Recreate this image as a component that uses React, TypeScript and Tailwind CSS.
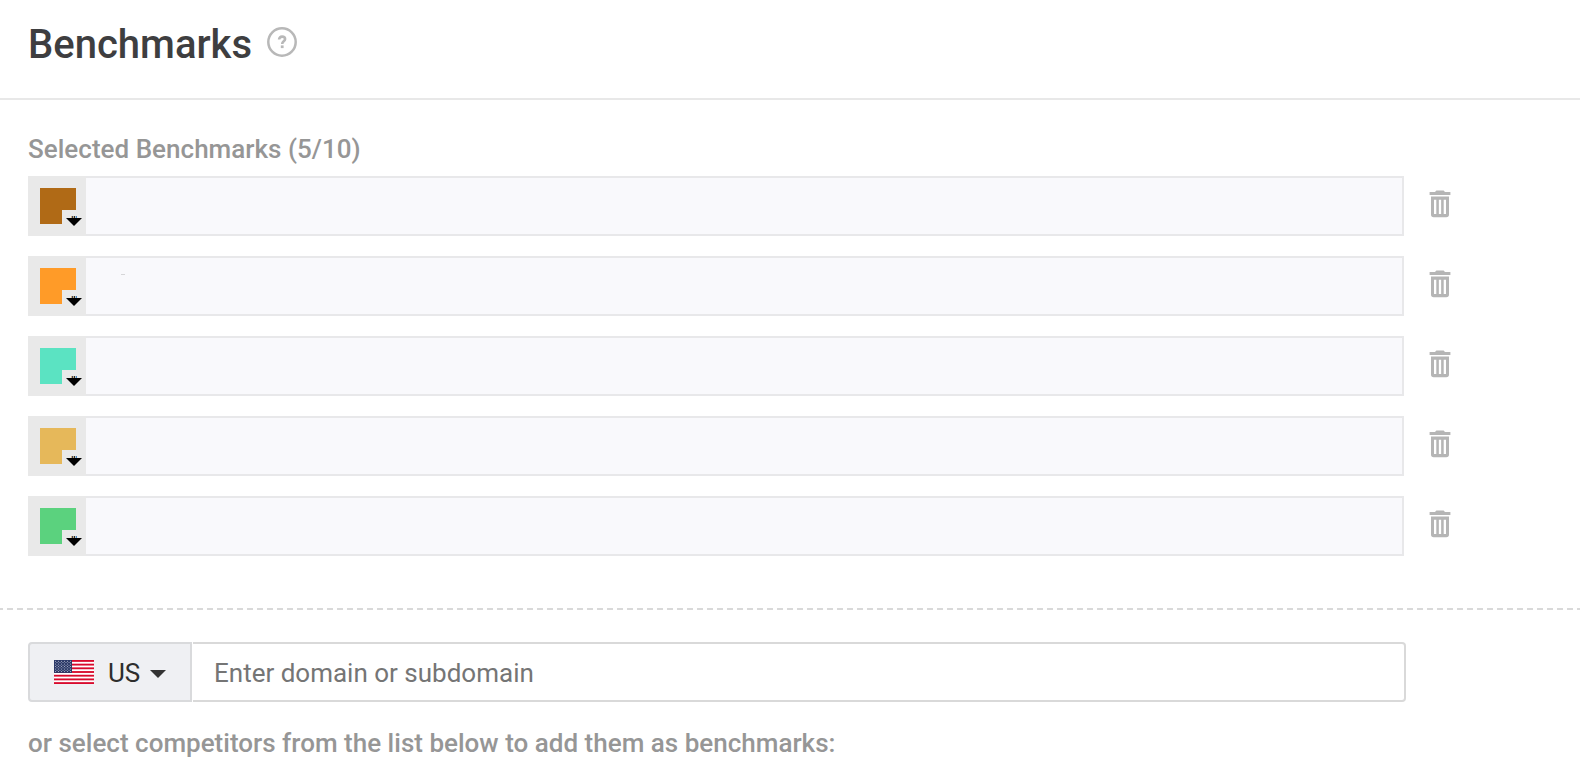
const benchmarks = [
  { id: 1, color: "#b06a16" },
  { id: 2, color: "#ff9b28" },
  { id: 3, color: "#5be3c2" },
  { id: 4, color: "#e6b85a" },
  { id: 5, color: "#5bd27e" },
];

const stripes = [0, 1, 2, 3, 4, 5, 6];
const starRows = [0, 1, 2, 3, 4, 5, 6, 7, 8];

function HelpIcon() {
  return (
    <svg width="30" height="30" viewBox="0 0 30 30" fill="none">
      <circle cx="15" cy="15" r="13.7" stroke="#b8b8b8" strokeWidth="2.5" />
      <path
        d="M12.1 12.6C12.1 10.6 13.3 9.6 15.1 9.6c1.8 0 3 1 3 2.5 0 2.2-2.9 2.3-2.9 4.8"
        stroke="#b8b8b8"
        strokeWidth="2.6"
      />
      <path d="M13.8 18.4h2.8v2.7h-2.8z" fill="#b8b8b8" />
    </svg>
  );
}

function TrashIcon() {
  return (
    <svg width="22" height="28" viewBox="0 0 22 28" fill="#b5b5b5">
      <path d="M6 2 7.4.6h7.2L16 2h5.4v3H.6V2z" />
      <path
        fillRule="evenodd"
        d="M2 6.6h18v18a2.7 2.7 0 0 1-2.7 2.7H4.7A2.7 2.7 0 0 1 2 24.6zM5 9.8v14.2h2.3V9.8zM9.85 9.8v14.2h2.3V9.8zM14.7 9.8v14.2H17V9.8z"
      />
    </svg>
  );
}

function FlagUS() {
  return (
    <svg width="40" height="24" viewBox="0 0 40 24">
      <rect width="40" height="24" fill="#fff" />
      {stripes.map((i) => (
        <rect key={i} y={(i * 2 * 24) / 13} width="40" height={24 / 13} fill="#d80a2c" />
      ))}
      <rect width="18" height="12.92" fill="#2c3a68" />
      {starRows.map((r) =>
        Array.from({ length: r % 2 ? 5 : 6 }, (_, c) => (
          <circle
            key={`${r}-${c}`}
            cx={(r % 2 ? 3 : 1.5) + c * 3}
            cy={1.3 + r * 1.29}
            r="0.5"
            fill="#c3c8da"
          />
        ))
      )}
    </svg>
  );
}

function PickerArrow() {
  return (
    <svg className="absolute top-10 left-[38px]" width="16" height="10" viewBox="0 0 16 10">
      <path d="M5 0h1v2H5z" fill="#d3b083" />
      <path d="M6 0h1v2H6z" fill="#39405e" />
      <path d="M7 0h1v2H7z" fill="#c9b27c" />
      <path d="M8 0h1v2H8z" fill="#26282e" />
      <path d="M9 0h1v2H9z" fill="#b9c4c8" />
      <path d="M10 0h1v2h-1z" fill="#3f86c8" />
      <path d="M0 2h16l-8 8z" />
    </svg>
  );
}

function BenchmarkRow({ color, marked }: { color: string; marked: boolean }) {
  return (
    <div className="flex h-[60px]">
      <div className="flex w-[1376px] border-2 border-[#e8e8ea] bg-[#f9f9fc]">
        <div className="relative -my-0.5 -ml-0.5 w-[58px] bg-[#e9e9e9] pt-3 pl-3">
          <div className="h-9 w-9" style={{ background: color }} />
          <div className="absolute top-[34px] left-[34px] h-[14px] w-[14px] bg-[#e9e9e9]" />
          <PickerArrow />
        </div>
        {marked && <div className="mt-[16px] ml-[35px] h-px w-[4px] bg-[#d6d6d8]" />}
      </div>
      <button className="mt-[14px] ml-[25px] h-7">
        <TrashIcon />
      </button>
    </div>
  );
}

export default function App() {
  return (
    <div className="h-[782px] overflow-hidden bg-white font-['Roboto',sans-serif]">
      <header className="flex h-[100px] border-b-2 border-[#e8e8e8] pl-7">
        <h1 className="mt-[21px] text-[40px] leading-[48px] font-medium text-[#3e3e40]">
          Benchmarks
        </h1>
        <div className="mt-[27px] ml-[15px]">
          <HelpIcon />
        </div>
      </header>

      <section className="h-[508px] pt-[33px] pl-7">
        <h2 className="h-[43px] text-[26px] leading-8 font-medium tracking-[0.02px] text-[#969696]">
          Selected Benchmarks (5/10)
        </h2>
        <div className="flex flex-col gap-5">
          {benchmarks.map((b) => (
            <BenchmarkRow key={b.id} color={b.color} marked={b.id === 2} />
          ))}
        </div>
      </section>

      <div className="h-0.5 bg-[repeating-linear-gradient(90deg,#d9d9d9_0_3px,#fff_3px_7px,#d9d9d9_7px_10px)]" />

      <section className="pt-8 pl-7">
        <div className="flex h-[60px] w-[1378px]">
          <button className="flex w-[164px] items-center rounded-l border-2 border-[#d9dadc] bg-[#eff0f3] pl-6">
            <FlagUS />
            <span className="mt-0.5 ml-[14px] text-[26px] leading-8 text-[#2d2d2d]">US</span>
            <svg className="mt-1 ml-[10px]" width="16" height="8" viewBox="0 0 16 8" fill="#333">
              <path d="M0 0h16L8 8z" />
            </svg>
          </button>
          <input
            className="ml-px flex-1 rounded-r border-y-2 border-r-2 border-[#d9d9d9] pt-0.5 pl-[21px] text-[26px] leading-8 outline-none placeholder:text-[#757575]"
            placeholder="Enter domain or subdomain"
          />
        </div>
        <p className="mt-[25px] text-[26px] leading-8 font-medium tracking-[0.01px] text-[#969696]">
          or select competitors from the list below to add them as benchmarks:
        </p>
      </section>
    </div>
  );
}
